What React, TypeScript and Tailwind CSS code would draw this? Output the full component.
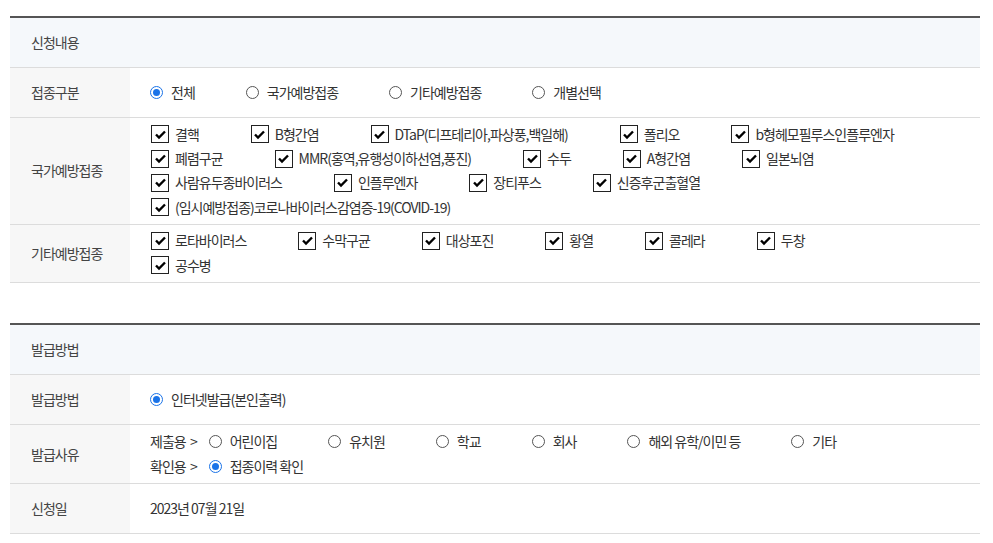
import React from 'react'

const FONT = "font-['Noto_Sans_CJK_KR','Noto_Sans',sans-serif]"

function Radio({ label, checked }: { label: string; checked?: boolean }) {
  return (
    <span className="inline-flex items-center mr-[51px] h-[24px]">
      {checked ? (
        <span className="w-[13px] h-[13px] rounded-full border border-[#1a73e8] flex items-center justify-center">
          <span className="w-[7px] h-[7px] rounded-full bg-[#1a73e8]" />
        </span>
      ) : (
        <span className="w-[13px] h-[13px] rounded-full border border-[#555] bg-white" />
      )}
      <span className="ml-[8px]">{label}</span>
    </span>
  )
}

function Check({ label }: { label: string }) {
  return (
    <span className="inline-flex items-center mr-[52px] h-[24.4px]">
      <span className="w-[18px] h-[18px] border border-[#222] bg-white flex items-center justify-center">
        <svg width="13" height="13" viewBox="0 0 13 13">
          <path d="M2 6.5 L5 9.5 L11 3.5" fill="none" stroke="#000" strokeWidth="2.4" />
        </svg>
      </span>
      <span className="ml-[6px]">{label}</span>
    </span>
  )
}

function Row({ label, children, className = '' }: { label: string; children: React.ReactNode; className?: string }) {
  return (
    <div className="flex border-b border-[#dcdcdc]">
      <div className="w-[120px] shrink-0 bg-[#f7f7f7] pl-[21px] flex items-center text-[#444]">{label}</div>
      <div className={`flex-1 pl-[20px] ${className}`}>{children}</div>
    </div>
  )
}

function Header({ title }: { title: string }) {
  return (
    <div className="border-t-2 border-[#555] bg-[#f5f8fb] border-b border-b-[#dcdcdc] h-[52px] flex items-center pl-[21px] text-[#444]">
      {title}
    </div>
  )
}

const national = [
  ['결핵', 'B형간염', 'DTaP(디프테리아,파상풍,백일해)', '폴리오', 'b형헤모필루스인플루엔자'],
  ['폐렴구균', 'MMR(홍역,유행성이하선염,풍진)', '수두', 'A형간염', '일본뇌염'],
  ['사람유두종바이러스', '인플루엔자', '장티푸스', '신증후군출혈열'],
  ['(임시예방접종)코로나바이러스감염증-19(COVID-19)'],
]

const other = [
  ['로타바이러스', '수막구균', '대상포진', '황열', '콜레라', '두창'],
  ['공수병'],
]

export default function App() {
  return (
    <div className={`${FONT} bg-white w-[993px] h-[543px] pt-[16px] px-[10px] text-[14px] tracking-[-1px] text-[#333]`}>
      <div className="w-[970px]">
        <Header title="신청내용" />
        <Row label="접종구분" className="h-[49px] flex items-center">
          <Radio label="전체" checked />
          <Radio label="국가예방접종" />
          <Radio label="기타예방접종" />
          <Radio label="개별선택" />
        </Row>
        <Row label="국가예방접종" className="pt-[4px] pb-[4px] pl-[21px]">
          {national.map((line, i) => (
            <div key={i} className="flex">
              {line.map(l => <Check key={l} label={l} />)}
            </div>
          ))}
        </Row>
        <Row label="기타예방접종" className="pt-[4px] pb-[5px] pl-[21px]">
          {other.map((line, i) => (
            <div key={i} className="flex">
              {line.map(l => <Check key={l} label={l} />)}
            </div>
          ))}
        </Row>
      </div>

      <div className="w-[970px] mt-[40px]">
        <Header title="발급방법" />
        <Row label="발급방법" className="h-[49px] flex items-center">
          <Radio label="인터넷발급(본인출력)" checked />
        </Row>
        <Row label="발급사유" className="pt-[4px] pb-[4px]">
          <div className="flex items-center h-[25px]">
            <span className="mr-[12px] whitespace-pre">제출용  &gt;</span>
            <Radio label="어린이집" />
            <Radio label="유치원" />
            <Radio label="학교" />
            <Radio label="회사" />
            <Radio label="해외 유학/이민 등" />
            <Radio label="기타" />
          </div>
          <div className="flex items-center h-[25px]">
            <span className="mr-[12px] whitespace-pre">확인용  &gt;</span>
            <Radio label="접종이력 확인" checked />
          </div>
        </Row>
        <Row label="신청일" className="h-[49px] flex items-center">
          2023년 07월 21일
        </Row>
      </div>
    </div>
  )
}
